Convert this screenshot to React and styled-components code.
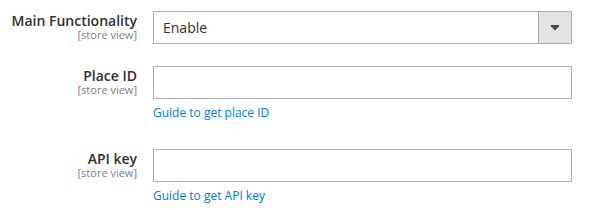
import React from "react";
import styled, { createGlobalStyle } from "styled-components";

const Global = createGlobalStyle`
  html, body { margin: 0; padding: 0; background: #ffffff; }
  body { font-family: "Open Sans", "Liberation Sans", sans-serif; color: #303030; }
`;

const Form = styled.div`
  display: flex;
  flex-direction: column;
  gap: 22px;
  padding: 11px 0 0 0;
  width: 572px;
`;

const Row = styled.div`
  display: grid;
  grid-template-columns: 137px 419px;
  column-gap: 16px;
  align-items: start;
`;

const LabelCell = styled.div`
  text-align: right;
  padding-top: 1px;
`;

const Label = styled.label`
  display: block;
  font-size: 14px;
  font-weight: 600;
  line-height: 17px;
  color: #303030;
`;

const Scope = styled.span`
  display: block;
  font-size: 11px;
  line-height: 12px;
  color: #808080;
`;

const Control = styled.div`
  display: flex;
  flex-direction: column;
`;

const SelectBox = styled.div`
  box-sizing: border-box;
  height: 33px;
  border: 1px solid #adadad;
  background: #ffffff;
  display: flex;
  align-items: stretch;
`;

const SelectValue = styled.div`
  flex: 1;
  display: flex;
  align-items: center;
  padding: 0 9px;
  font-size: 14px;
  color: #303030;
`;

const SelectButton = styled.div`
  width: 33px;
  box-sizing: border-box;
  border-left: 1px solid #adadad;
  background: #e3e3e3;
  display: flex;
  align-items: center;
  justify-content: center;
`;

const Input = styled.input`
  box-sizing: border-box;
  height: 33px;
  width: 100%;
  border: 1px solid #adadad;
  border-radius: 0;
  background: #ffffff;
  padding: 0 10px;
  font-family: inherit;
  font-size: 14px;
  outline: none;
  margin: 0;
`;

const Note = styled.a`
  display: block;
  margin-top: 5px;
  margin-bottom: 5px;
  font-size: 12px;
  line-height: 18px;
  color: #007bdb;
  text-decoration: none;
`;

const Arrow = () => (
  <svg width="8" height="6" viewBox="0 0 8 6">
    <polygon points="0,0 8,0 8,1.5 4,5.5 0,1.5" fill="#514943" />
  </svg>
);

export default function App() {
  return (
    <>
      <Global />
      <Form>
        <Row>
          <LabelCell>
            <Label>Main Functionality</Label>
            <Scope>[store view]</Scope>
          </LabelCell>
          <Control>
            <SelectBox>
              <SelectValue>Enable</SelectValue>
              <SelectButton>
                <Arrow />
              </SelectButton>
            </SelectBox>
          </Control>
        </Row>
        <Row>
          <LabelCell>
            <Label>Place ID</Label>
            <Scope>[store view]</Scope>
          </LabelCell>
          <Control>
            <Input type="text" />
            <Note href="#">Guide to get place ID</Note>
          </Control>
        </Row>
        <Row>
          <LabelCell>
            <Label>API key</Label>
            <Scope>[store view]</Scope>
          </LabelCell>
          <Control>
            <Input type="text" />
            <Note href="#">Guide to get API key</Note>
          </Control>
        </Row>
      </Form>
    </>
  );
}
